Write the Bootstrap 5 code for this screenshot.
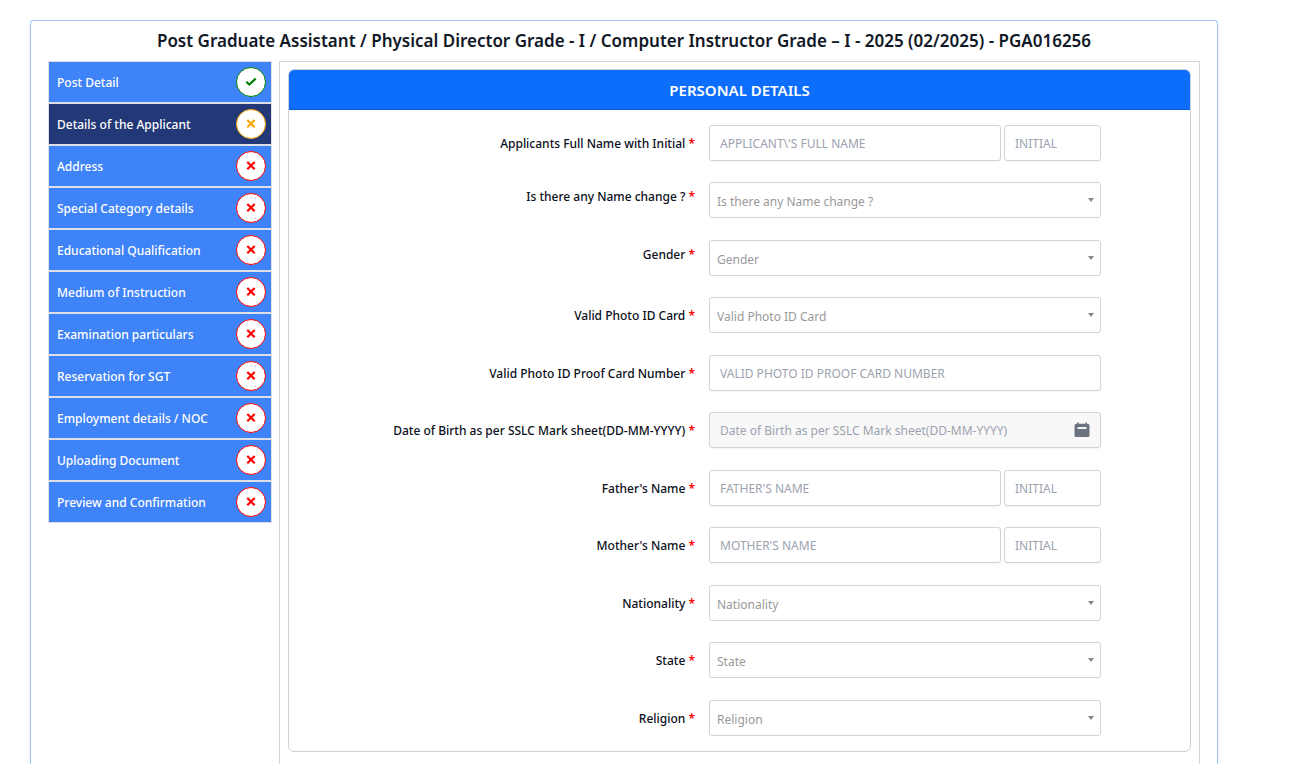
<!DOCTYPE html>
<html lang="en">
<head>
<meta charset="utf-8">
<meta name="viewport" content="width=device-width, initial-scale=1">
<title>Application - Personal Details</title>
<link href="https://cdn.jsdelivr.net/npm/bootstrap@5.3.0/dist/css/bootstrap.min.css" rel="stylesheet">
<style>
  body { font-family: "Noto Sans", "Open Sans", sans-serif; font-size: 12px; line-height: 18px; color: #111827; background: #fff; }
  .page { padding: 20px 90px 0 30px; }
  .sheet { border: 1px solid #9ec5fe; border-bottom: 0; border-radius: 4px 4px 0 0; padding: 0 17px; box-shadow: 0 2px 4px rgba(0,0,0,.07); }
  .sheet-title { font-size: 17px; line-height: 24px; font-weight: 600; padding: 8px 0; }
  .steps { width: 224px; }
  .step { height: 42px; border: 1px solid #dee2e6; background: #3f83f8; color: #fff; font-weight: 500; padding: 0 5px 0 8px; text-decoration: none; }
  .step-name { padding-top: 2px; }
  .step.current { background: #233876; }
  .state { width: 30px; height: 30px; border: 1px solid; border-radius: 50%; background: #fff; color: red; }
  .state.done { color: green; }
  .state.pending { color: orange; }
  .pane { border: 1px solid #d1d5db; border-bottom: 0; padding: 7px 8px 12px; margin-left: 7px; }
  .panel { border: 1px solid #ced0d6; border-radius: 6px; }
  .panel-title { background: #0d6efd; color: #fff; font-size: 15px; line-height: 38px; padding-top: 1px; font-weight: 600; border-bottom: 1px solid #0b5cd6; border-radius: 5px 5px 0 0; }
  .fields { padding: 15px 0; }
  .field { display: grid; grid-template-columns: 420fr 392fr 89fr; align-items: center; margin-bottom: 21px; }
  .field:nth-child(even) { margin-bottom: 22px; }
  .field:last-child { margin-bottom: 0; }
  .field > label { font-weight: 500; color: #0b1020; text-align: right; padding: 2px 14px 0 0; }
  .field.raised > label { padding-bottom: 8px; }
  .req { color: red; font-weight: 600; }
  .box, .pick { height: 36px; font-size: 12px; line-height: 18px; border: 1px solid #d1d5db; border-radius: 3px; }
  .box { padding: 1px 10px 0; box-shadow: 0 1px 2px rgba(0,0,0,.05); }
  .box::placeholder { color: #9ca3af; opacity: 1; }
  .box:disabled { background: #f8f8f8; }
  .pick { color: #999; padding: 3px 24px 0 7px; background-image: url("data:image/svg+xml,%3Csvg xmlns='http://www.w3.org/2000/svg' viewBox='0 0 6 4'%3E%3Cpath d='M0 0h6L3 4z' fill='%23888'/%3E%3C/svg%3E"); background-size: 6px 4px; background-position: right 6px center; }
  .pair { gap: 3px; }
  .initial { flex: 0 0 97px; }
  .cal { position: absolute; right: 10px; top: 9px; }
</style>
</head>
<body>
<div class="page d-flex flex-column min-vh-100">
  <main class="sheet d-flex flex-column flex-grow-1">
    <h1 class="sheet-title text-center mb-0">Post Graduate Assistant / Physical Director Grade - I / Computer Instructor Grade – I - 2025 (02/2025) - PGA016256</h1>
    <svg class="d-none" aria-hidden="true">
      <symbol id="check" viewBox="0 0 12 12"><path d="M1.300 5.800 4.300 8.600 10.700 2.600" fill="none" stroke="currentColor" stroke-width="2.200"/></symbol>
      <symbol id="cross" viewBox="0 0 12 12"><path d="M2.300 2l7.400 7.200M9.700 2L2.300 9.200" fill="none" stroke="currentColor" stroke-width="2.200"/></symbol>
    </svg>
    <div class="d-flex flex-grow-1">
      <nav class="steps flex-shrink-0" aria-label="Application steps">
        <a href="#" class="step d-flex align-items-center justify-content-between"><span class="step-name">Post Detail</span><span class="state done d-flex align-items-center justify-content-center"><svg width="12" height="12"><use href="#check"/></svg></span></a>
        <a href="#" class="step current d-flex align-items-center justify-content-between" aria-current="step"><span class="step-name">Details of the Applicant</span><span class="state pending d-flex align-items-center justify-content-center"><svg width="12" height="12"><use href="#cross"/></svg></span></a>
        <a href="#" class="step d-flex align-items-center justify-content-between"><span class="step-name">Address</span><span class="state d-flex align-items-center justify-content-center"><svg width="12" height="12"><use href="#cross"/></svg></span></a>
        <a href="#" class="step d-flex align-items-center justify-content-between"><span class="step-name">Special Category details</span><span class="state d-flex align-items-center justify-content-center"><svg width="12" height="12"><use href="#cross"/></svg></span></a>
        <a href="#" class="step d-flex align-items-center justify-content-between"><span class="step-name">Educational Qualification</span><span class="state d-flex align-items-center justify-content-center"><svg width="12" height="12"><use href="#cross"/></svg></span></a>
        <a href="#" class="step d-flex align-items-center justify-content-between"><span class="step-name">Medium of Instruction</span><span class="state d-flex align-items-center justify-content-center"><svg width="12" height="12"><use href="#cross"/></svg></span></a>
        <a href="#" class="step d-flex align-items-center justify-content-between"><span class="step-name">Examination particulars</span><span class="state d-flex align-items-center justify-content-center"><svg width="12" height="12"><use href="#cross"/></svg></span></a>
        <a href="#" class="step d-flex align-items-center justify-content-between"><span class="step-name">Reservation for SGT</span><span class="state d-flex align-items-center justify-content-center"><svg width="12" height="12"><use href="#cross"/></svg></span></a>
        <a href="#" class="step d-flex align-items-center justify-content-between"><span class="step-name">Employment details / NOC</span><span class="state d-flex align-items-center justify-content-center"><svg width="12" height="12"><use href="#cross"/></svg></span></a>
        <a href="#" class="step d-flex align-items-center justify-content-between"><span class="step-name">Uploading Document</span><span class="state d-flex align-items-center justify-content-center"><svg width="12" height="12"><use href="#cross"/></svg></span></a>
        <a href="#" class="step d-flex align-items-center justify-content-between"><span class="step-name">Preview and Confirmation</span><span class="state d-flex align-items-center justify-content-center"><svg width="12" height="12"><use href="#cross"/></svg></span></a>
      </nav>
      <section class="pane flex-grow-1">
        <form class="panel">
          <h2 class="panel-title text-center mb-0">PERSONAL DETAILS</h2>
          <div class="fields">
            <div class="field">
              <label for="fullname">Applicants Full Name with Initial <span class="req">*</span></label>
              <div class="pair d-flex"><input id="fullname" class="form-control box" placeholder="APPLICANT\'S FULL NAME"><input class="form-control box initial" placeholder="INITIAL" aria-label="Applicant initial"></div>
            </div>
            <div class="field raised">
              <label for="change">Is there any Name change ? <span class="req">*</span></label>
              <select id="change" class="form-select pick"><option>Is there any Name change ?</option></select>
            </div>
            <div class="field raised">
              <label for="gender">Gender <span class="req">*</span></label>
              <select id="gender" class="form-select pick"><option>Gender</option></select>
            </div>
            <div class="field">
              <label for="idcard">Valid Photo ID Card <span class="req">*</span></label>
              <select id="idcard" class="form-select pick"><option>Valid Photo ID Card</option></select>
            </div>
            <div class="field">
              <label for="idnumber">Valid Photo ID Proof Card Number <span class="req">*</span></label>
              <input id="idnumber" class="form-control box" placeholder="VALID PHOTO ID PROOF CARD NUMBER">
            </div>
            <div class="field">
              <label for="dob">Date of Birth as per SSLC Mark sheet(DD-MM-YYYY) <span class="req">*</span></label>
              <div class="position-relative">
                <input id="dob" class="form-control box" placeholder="Date of Birth as per SSLC Mark sheet(DD-MM-YYYY)" disabled>
                <svg class="cal" width="18" height="18" viewBox="0 0 18 18" aria-hidden="true"><path d="M4 1.500h1.600v1.200h6.800V1.500H14v1.200h.5A2 2 0 0 1 16.500 4.700v9.800a1.500 1.500 0 0 1-1.500 1.500H3a1.500 1.500 0 0 1-1.500-1.500V4.700a2 2 0 0 1 2-2H4z" fill="#6b7280"/><path d="M4.500 7h9" stroke="#fff" stroke-width="1.800"/></svg>
              </div>
            </div>
            <div class="field">
              <label for="father">Father's Name <span class="req">*</span></label>
              <div class="pair d-flex"><input id="father" class="form-control box" placeholder="FATHER'S NAME"><input class="form-control box initial" placeholder="INITIAL" aria-label="Father's initial"></div>
            </div>
            <div class="field">
              <label for="mother">Mother's Name <span class="req">*</span></label>
              <div class="pair d-flex"><input id="mother" class="form-control box" placeholder="MOTHER'S NAME"><input class="form-control box initial" placeholder="INITIAL" aria-label="Mother's initial"></div>
            </div>
            <div class="field">
              <label for="nationality">Nationality <span class="req">*</span></label>
              <select id="nationality" class="form-select pick"><option>Nationality</option></select>
            </div>
            <div class="field">
              <label for="state">State <span class="req">*</span></label>
              <select id="state" class="form-select pick"><option>State</option></select>
            </div>
            <div class="field">
              <label for="religion">Religion <span class="req">*</span></label>
              <select id="religion" class="form-select pick"><option>Religion</option></select>
            </div>
          </div>
        </form>
      </section>
    </div>
  </main>
</div>
<script src="https://cdn.jsdelivr.net/npm/bootstrap@5.3.0/dist/js/bootstrap.bundle.min.js"></script>
</body>
</html>
